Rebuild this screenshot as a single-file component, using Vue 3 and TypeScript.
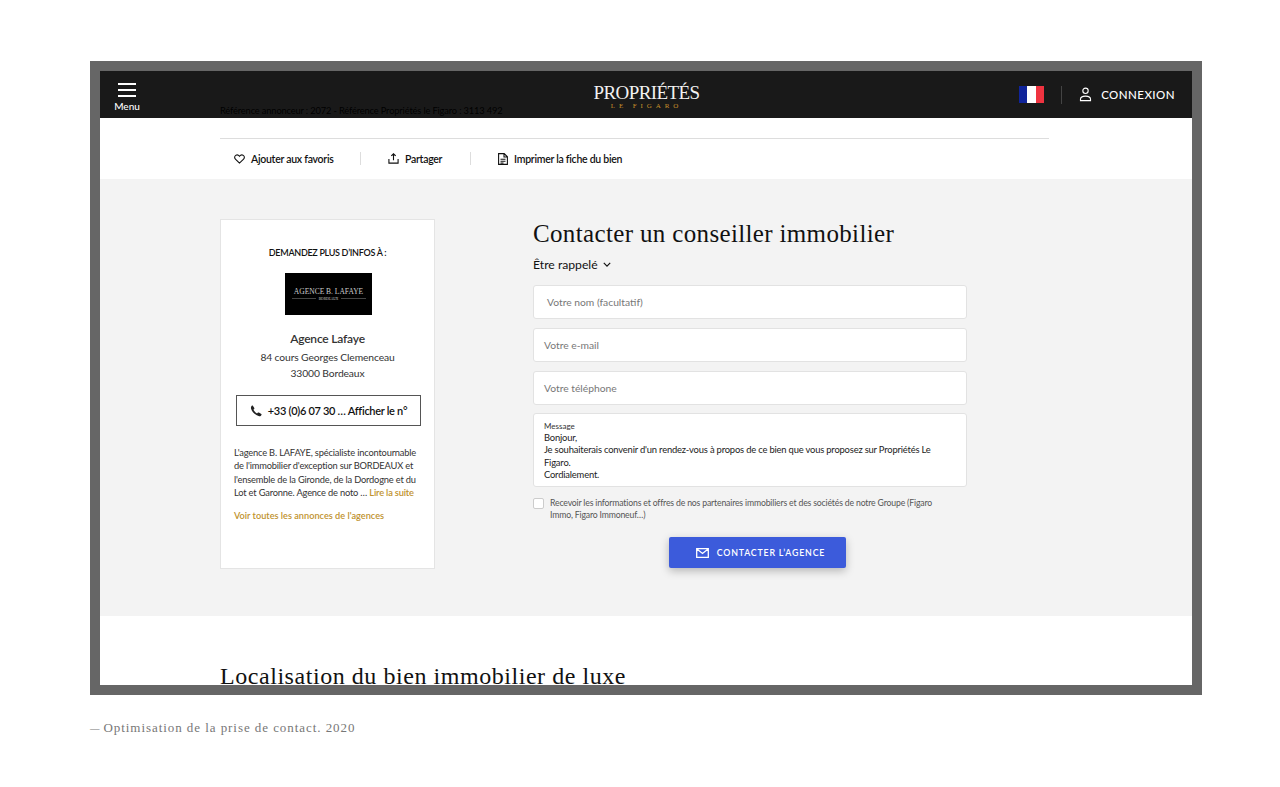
<script setup lang="ts">
interface Field {
  id: string;
  label: string;
  indent?: boolean;
}

const fields: Field[] = [
  { id: 'name', label: 'Votre nom (facultatif)', indent: true },
  { id: 'email', label: 'Votre e-mail' },
  { id: 'phone', label: 'Votre téléphone' },
];

const messageLines = [
  'Bonjour,',
  "Je souhaiterais convenir d'un rendez-vous à propos de ce bien que vous proposez sur Propriétés Le Figaro.",
  'Cordialement.',
];
</script>

<template>
  <div class="page">
    <div class="frame">
      <header class="topbar">
        <div class="menu">
          <span class="burger"><i></i><i></i><i></i></span>
          <span class="menu-label">Menu</span>
        </div>
        <div class="brand">
          <span class="brand-main">PROPRIÉTÉS</span>
          <span class="brand-sub">LE FIGARO</span>
        </div>
        <div class="account">
          <span class="flag"><i></i><i></i><i></i></span>
          <span class="account-sep"></span>
          <svg class="user-icon" viewBox="0 0 14 16" width="13" height="15" fill="none" stroke="#fff" stroke-width="1.2">
            <circle cx="7" cy="4" r="2.9" />
            <path d="M1.6 14.6h10.8v-1.4c0-2-2.4-3.4-5.4-3.4s-5.400 1.400-5.400 3.400z" />
          </svg>
          <span class="account-label">CONNEXION</span>
        </div>
      </header>

      <div class="ghost-ref">Référence annonceur : 2072 - Référence Propriétés le Figaro : 3113 492</div>

      <section class="actions">
        <div class="actions-row">
          <a class="action action-fav">
            <svg viewBox="0 0 12 11" width="11" height="10" fill="none" stroke="#111" stroke-width="1.2">
              <path d="M6 10 1.500 5.600C.2 4.300.5 2.400 1.800 1.500 3.100.6 4.900 1 6 2.500 7.100 1 8.900.6 10.200 1.500c1.300.9 1.600 2.800.3 4.100z" />
            </svg>
            Ajouter aux favoris
          </a>
          <a class="action action-share">
            <svg viewBox="0 0 12 12" width="11" height="11" fill="none" stroke="#111" stroke-width="1.200">
              <path d="M6 8V1M3.600 3.200 6 .9l2.400 2.300M1 6.500V11h10V6.500" />
            </svg>
            Partager
          </a>
          <a class="action action-print">
            <svg viewBox="0 0 10 12" width="10" height="12" fill="none" stroke="#111" stroke-width="1.100">
              <path d="M.6.6h5.600l3.200 3.200v7.600H.6zM6 .8V4h3.200M2.500 6.300h5M2.500 8.200h5M2.500 10h3" />
            </svg>
            Imprimer la fiche du bien
          </a>
        </div>
      </section>

      <section class="contact">
        <aside class="agency">
          <div class="agency-title">DEMANDEZ PLUS D’INFOS À :</div>
          <div class="agency-logo">
            <span class="logo-name">AGENCE B. LAFAYE</span>
            <span class="logo-city">BORDEAUX</span>
          </div>
          <div class="agency-name">Agence Lafaye</div>
          <div class="agency-address">84 cours Georges Clemenceau<br />33000 Bordeaux</div>
          <button class="phone-btn" type="button">
            <svg viewBox="0 0 12 12" width="12" height="12" fill="#222">
              <path d="M2.700.6 4.300 3c.2.300.1.600-.1.900l-.8.9c.7 1.400 2 2.800 3.600 3.600l1-.8c.3-.2.600-.2.900-.1l2.400 1.500c.3.200.4.500.2.800-.5 1.100-1.300 1.700-2.300 1.500C4.800 9.800 1.900 6.800 1 3.500.7 2.300 1.200 1.300 2 .6c.2-.2.500-.200.700 0z" />
            </svg>
            <span>+33 (0)6 07 30 … Afficher le n°</span>
          </button>
          <p class="agency-desc">
            L'agence B. LAFAYE, spécialiste incontournable de l'immobilier d'exception sur BORDEAUX et
            l'ensemble de la Gironde, de la Dordogne et du Lot et Garonne. Agence de noto …
            <a class="gold">Lire la suite</a>
          </p>
          <a class="gold all-ads">Voir toutes les annonces de l'agences</a>
        </aside>

        <form class="form" @submit.prevent>
          <h2 class="form-title">Contacter un conseiller immobilier</h2>
          <div class="callback">
            Être rappelé
            <svg viewBox="0 0 10 6" width="8" height="5" fill="none" stroke="#111" stroke-width="1.500">
              <path d="M1 1l4 4 4-4" />
            </svg>
          </div>
          <div class="fields">
            <div v-for="field in fields" :key="field.id" class="field" :class="{ 'field--indent': field.indent }">
              {{ field.label }}
            </div>
            <div class="field-message">
              <div class="message-label">Message</div>
              <div v-for="line in messageLines" :key="line">{{ line }}</div>
            </div>
          </div>
          <label class="consent">
            <span class="checkbox"></span>
            <span>Recevoir les informations et offres de nos partenaires immobiliers et des sociétés de notre Groupe (Figaro Immo, Figaro Immoneuf…)</span>
          </label>
          <button class="submit" type="submit">
            <svg viewBox="0 0 13 10" width="13" height="10" fill="none" stroke="#fff" stroke-width="1.300">
              <path d="M.7.7h11.600v8.600H.7zM.9 1l5.600 4.400L12.100 1" />
            </svg>
            CONTACTER L’AGENCE
          </button>
        </form>
      </section>

      <section class="location">
        <h2 class="location-title">Localisation du bien immobilier de luxe</h2>
      </section>
    </div>
    <p class="caption"><span class="caption-dash">—</span>Optimisation de la prise de contact. 2020</p>
  </div>
</template>

<style>
html,
body {
  margin: 0;
  background: #fff;
}
</style>

<style scoped>
.page {
  height: 787px;
  padding: 61px 78px 0 90px;
  box-sizing: border-box;
  overflow: hidden;
  font-family: 'Lato', 'Noto Sans', sans-serif;
  color: #111;
}

.frame {
  position: relative;
  height: 634px;
  box-sizing: border-box;
  overflow: hidden;
  background: #fff;
  border: 10px solid #666;
}

.topbar {
  position: absolute;
  top: 0;
  right: 0;
  left: 0;
  z-index: 1;
  display: flex;
  align-items: center;
  justify-content: space-between;
  height: 47px;
  padding: 0 17px 0 14px;
  color: #fff;
  background: rgb(0 0 0 / 90%);
}

.menu {
  display: flex;
  flex-direction: column;
  align-items: center;
  width: 26px;
  padding-top: 5px;
}

.burger {
  display: flex;
  flex-direction: column;
  gap: 4px;
  width: 18px;
  margin-bottom: 3px;
}

.burger i {
  display: block;
  height: 2px;
  background: #fff;
}

.menu-label {
  font-size: 10px;
  font-weight: 500;
  line-height: 12px;
}

.brand {
  position: absolute;
  top: 12px;
  left: 494px;
  display: flex;
  flex-direction: column;
  align-items: center;
  width: 105px;
  font-family: 'Liberation Serif', serif;
}

.brand-main {
  font-size: 19px;
  line-height: 20px;
  letter-spacing: -0.600px;
  color: #f2f2f2;
}

.brand-sub {
  font-size: 7px;
  line-height: 6px;
  letter-spacing: 3.900px;
  color: #c8922b;
}

.account {
  display: flex;
  align-items: center;
}

.flag {
  display: flex;
  width: 25px;
  height: 17px;
}

.flag i {
  flex: 1;
}

.flag i:nth-child(1) {
  background: #10249a;
}

.flag i:nth-child(2) {
  background: #fff;
}

.flag i:nth-child(3) {
  background: #ef3340;
}

.account-sep {
  width: 1px;
  height: 18px;
  margin: 0 17px;
  background: #444;
}

.account-label {
  margin-left: 9px;
  font-size: 11.500px;
  font-weight: 500;
  letter-spacing: 0.450px;
}

.ghost-ref {
  position: absolute;
  top: 34px;
  left: 120px;
  font-size: 9.300px;
  letter-spacing: -0.150px;
  color: #000;
}

.actions {
  height: 108px;
  box-sizing: border-box;
  padding: 67px 143px 0 120px;
}

.actions-row {
  display: flex;
  align-items: center;
  height: 39px;
  padding-bottom: 2px;
  border-top: 1px solid #ddd;
}

.action {
  display: flex;
  gap: 6px;
  align-items: center;
  font-size: 10.500px;
  font-weight: 600;
  letter-spacing: -0.270px;
}

.action-fav {
  width: 141px;
  height: 13px;
  padding-left: 14px;
  box-sizing: border-box;
  border-right: 1px solid #ddd;
}

.action-share {
  width: 110px;
  height: 13px;
  padding-left: 27px;
  box-sizing: border-box;
  border-right: 1px solid #ddd;
}

.action-print {
  padding-left: 27px;
}

.contact {
  display: flex;
  gap: 98px;
  height: 437px;
  box-sizing: border-box;
  padding: 40px 0 0 120px;
  background: #f3f3f3;
}

.agency {
  display: flex;
  flex-direction: column;
  align-items: center;
  width: 215px;
  height: 350px;
  box-sizing: border-box;
  padding: 27px 14px 0;
  background: #fff;
  border: 1px solid #e4e4e4;
}

.agency-title {
  font-size: 9px;
  font-weight: 600;
  line-height: 12px;
  letter-spacing: -0.300px;
  white-space: nowrap;
}

.agency-logo {
  display: flex;
  flex-direction: column;
  align-items: center;
  justify-content: center;
  width: 87px;
  height: 42px;
  margin: 14px 0 0 2px;
  font-family: 'Liberation Serif', serif;
  color: #ccc;
  background: #000;
}

.logo-name {
  font-size: 7.500px;
  line-height: 9px;
  white-space: nowrap;
}

.logo-city {
  display: flex;
  gap: 3px;
  align-items: center;
  justify-content: center;
  width: 74px;
  font-size: 3.500px;
  line-height: 6px;
}

.logo-city::before,
.logo-city::after {
  flex: 1;
  height: 1px;
  content: '';
  background: #444;
}

.agency-name {
  margin-top: 16px;
  font-size: 12px;
  font-weight: 600;
  line-height: 16px;
  letter-spacing: -0.200px;
  color: #333;
}

.agency-address {
  margin-top: 2px;
  font-size: 10.300px;
  line-height: 16px;
  letter-spacing: -0.120px;
  color: #333;
  text-align: center;
  white-space: nowrap;
}

.phone-btn {
  display: flex;
  flex: none;
  gap: 6px;
  align-items: center;
  justify-content: center;
  width: 185px;
  height: 31px;
  margin: 14px 0 0 2px;
  padding: 0;
  font-family: inherit;
  font-size: 11px;
  font-weight: 600;
  letter-spacing: -0.300px;
  color: #111;
  background: #fff;
  border: 1px solid #555;
}

.agency-desc {
  flex: none;
  align-self: flex-start;
  width: 186px;
  margin: 20px 0 0 -1px;
  font-size: 9.300px;
  line-height: 13.300px;
  letter-spacing: -0.180px;
  color: #333;
}

.gold {
  font-weight: 600;
  color: #c0922e;
}

.all-ads {
  align-self: flex-start;
  margin: 10px 0 0 -1px;
  font-size: 9.200px;
  line-height: 13px;
}

.form {
  display: flex;
  flex-direction: column;
  width: 434px;
}

.form-title {
  margin: 0;
  font-family: 'Liberation Serif', serif;
  font-size: 25px;
  font-weight: 400;
  line-height: 30px;
  letter-spacing: 0.350px;
  color: #111;
  white-space: nowrap;
}

.callback {
  display: flex;
  gap: 5px;
  align-items: center;
  height: 18px;
  margin-top: 6px;
  font-size: 12.200px;
  color: #111;
}

.fields {
  display: flex;
  flex-direction: column;
  gap: 9px;
  margin-top: 12px;
}

.field {
  display: flex;
  align-items: center;
  height: 34px;
  box-sizing: border-box;
  padding: 0 0 1px 10px;
  font-size: 10.300px;
  color: #777;
  background: #fff;
  border: 1px solid #e2e2e2;
  border-radius: 3px;
}

.field--indent {
  padding-left: 13px;
}

.field-message {
  height: 74px;
  margin-top: -1px;
  box-sizing: border-box;
  padding: 6px 14px 0 10px;
  font-size: 9.400px;
  line-height: 12.300px;
  letter-spacing: -0.180px;
  color: #222;
  background: #fff;
  border: 1px solid #e2e2e2;
  border-radius: 3px;
}

.message-label {
  font-size: 8px;
  line-height: 12px;
  letter-spacing: 0;
  color: #333;
}

.consent {
  display: flex;
  gap: 6px;
  align-items: flex-start;
  margin-top: 10px;
  padding-right: 20px;
  font-size: 8.700px;
  line-height: 12px;
  letter-spacing: -0.170px;
  color: #555;
}

.checkbox {
  flex: none;
  width: 11px;
  height: 11px;
  margin-top: 1px;
  background: #fff;
  border: 1px solid #ccc;
  border-radius: 2px;
  box-sizing: border-box;
}

.submit {
  display: flex;
  gap: 8px;
  align-items: center;
  justify-content: center;
  align-self: flex-start;
  width: 177px;
  height: 31px;
  margin: 16px 0 0 136px;
  padding: 0 0 0 6px;
  font-family: inherit;
  font-size: 8.800px;
  font-weight: 600;
  letter-spacing: 0.800px;
  color: #fff;
  background: #3c5bdb;
  border: 0;
  border-radius: 2px;
  box-shadow: 0 3px 8px rgb(0 0 0 / 25%);
}

.location {
  padding: 45px 0 0 120px;
}

.location-title {
  margin: 0;
  font-family: 'Liberation Serif', serif;
  font-size: 24px;
  font-weight: 400;
  line-height: 30px;
  letter-spacing: 0.550px;
  color: #111;
  white-space: nowrap;
}

.caption {
  margin: 25px 0 0;
  font-family: 'Liberation Serif', serif;
  font-size: 13px;
  line-height: 16px;
  letter-spacing: 0.940px;
  color: #777;
}

.caption-dash {
  margin-right: 4px;
  font-size: 9.500px;
  letter-spacing: 0;
}
</style>
